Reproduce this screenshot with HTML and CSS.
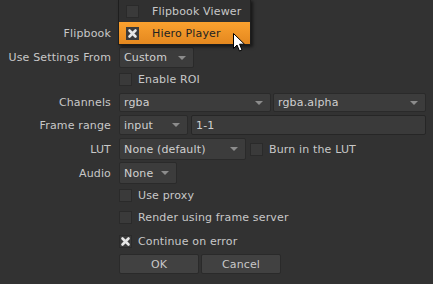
FILE: index.html
```html
<!DOCTYPE html>
<html lang="en">
<head>
    <meta charset="UTF-8">
    <title>Flipbook</title>
    <link rel="stylesheet" href="styles.css">
</head>
<body>
    <div class="panel">
        <div class="row row-flipbook">
            <span class="label">Flipbook</span>
            <!-- covered by the open popup menu -->
            <div class="dropdown w-flip"><i class="arrow"></i></div>
        </div>
        <div class="row row-settings">
            <span class="label">Use Settings From</span>
            <div class="dropdown w-custom"><span>Custom</span><i class="arrow"></i></div>
        </div>
        <div class="row row-check">
            <span class="label"></span>
            <label class="check"><span class="box"></span>Enable ROI</label>
        </div>
        <div class="row row-channels">
            <span class="label">Channels</span>
            <div class="dropdown w-rgba"><span>rgba</span><i class="arrow"></i></div>
            <div class="dropdown w-alpha"><span>rgba.alpha</span><i class="arrow"></i></div>
        </div>
        <div class="row row-frame">
            <span class="label">Frame range</span>
            <div class="dropdown w-input"><span>input</span><i class="arrow"></i></div>
            <div class="field">1-1</div>
        </div>
        <div class="row row-lut">
            <span class="label">LUT</span>
            <div class="dropdown w-lut"><span>None (default)</span><i class="arrow"></i></div>
            <label class="check check-inline"><span class="box"></span>Burn in the LUT</label>
        </div>
        <div class="row row-audio">
            <span class="label">Audio</span>
            <div class="dropdown w-audio"><span>None</span><i class="arrow"></i></div>
        </div>
        <div class="row row-check row-proxy">
            <span class="label"></span>
            <label class="check"><span class="box"></span>Use proxy</label>
        </div>
        <div class="row row-check">
            <span class="label"></span>
            <label class="check"><span class="box"></span>Render using frame server</label>
        </div>
        <div class="row row-check row-continue">
            <span class="label"></span>
            <label class="check"><span class="box checked"><svg viewBox="0 0 13 13" width="13" height="13"><path d="M3.5 3.5 L9.5 9.5 M9.5 3.5 L3.5 9.5" stroke="#e6e6e6" stroke-width="2.6" stroke-linecap="round"/></svg></span>Continue on error</label>
        </div>
        <div class="row row-buttons">
            <span class="label"></span>
            <button class="btn">OK</button>
            <button class="btn">Cancel</button>
        </div>
    </div>

    <div class="popup">
        <div class="popup-item"><span class="box"></span>Flipbook Viewer</div>
        <div class="popup-item active"><span class="box checked"><svg viewBox="0 0 13 13" width="13" height="13"><path d="M3.5 3.5 L9.5 9.5 M9.5 3.5 L3.5 9.5" stroke="#e6e6e6" stroke-width="2.6" stroke-linecap="round"/></svg></span>Hiero Player</div>
    </div>

    <svg class="cursor" width="13" height="20" viewBox="0 0 13 20">
        <path d="M0.5 0.5 L0.5 15.5 L4 12 L6.5 18 L9 17 L6.6 11.2 L11.5 11.2 Z" fill="#fff" stroke="#000" stroke-width="1"/>
    </svg>
</body>
</html>
```

FILE: styles.css
```css
/* Base */
body {
    margin: 0;
    background: #323232;
    font-family: 'DejaVu Sans', sans-serif;
    font-size: 11px;
    letter-spacing: 0.15px;
    color: #c8c8c8;
    width: 433px;
    height: 284px;
    overflow: hidden;
    position: relative;
}

.panel {
    padding-top: 23px;
}

.row {
    display: flex;
    align-items: center;
    height: 21px;
}

.label {
    width: 111px;
    flex: none;
    text-align: right;
    margin-right: 8px;
    white-space: nowrap;
}

.row-settings { margin-top: 3px; height: 21px; }
.row-check { height: 21px; margin-top: 1px; }
.row-channels { margin-top: 3px; height: 19px; }
.row-frame { margin-top: 3px; height: 20px; }
.row-lut { margin-top: 3px; height: 22px; }
.row-audio { margin-top: 2px; height: 22px; }
.row-proxy { margin-top: 1px; }
.row-continue { margin-top: 3px; }
.row-buttons { margin-top: 2px; height: 20px; }

/* Dropdowns */
.dropdown {
    position: relative;
    height: 100%;
    box-sizing: border-box;
    background: #3c3c3c;
    border: 1px solid #2a2a2a;
    border-radius: 2px;
    padding-left: 4px;
    display: flex;
    align-items: center;
    color: #d0d0d0;
}

.arrow {
    position: absolute;
    right: 7px;
    top: 50%;
    margin-top: -2px;
    width: 0;
    height: 0;
    border-left: 4px solid transparent;
    border-right: 4px solid transparent;
    border-top: 4px solid #8c8c8c;
}

.w-flip { width: 131px; }
.w-custom { width: 75px; }
.w-rgba { width: 152px; }
.w-alpha { width: 153px; margin-left: 2px; }
.w-input { width: 69px; }
.w-lut { width: 127px; }
.w-audio { width: 58px; }

.field {
    margin-left: 3px;
    width: 235px;
    height: 100%;
    box-sizing: border-box;
    background: #3a3a3a;
    border: 1px solid #262626;
    border-radius: 2px;
    padding-left: 4px;
    display: flex;
    align-items: center;
    color: #d0d0d0;
}

/* Checkboxes */
.check {
    display: flex;
    align-items: center;
    white-space: nowrap;
}

.check-inline {
    margin-left: 4px;
}

.box {
    width: 13px;
    height: 13px;
    box-sizing: border-box;
    background: #3a3a3a;
    border: 1px solid #2a2a2a;
    margin-right: 6px;
    flex: none;
    display: block;
    position: relative;
}

.box svg {
    position: absolute;
    left: -1px;
    top: -1px;
}

/* Buttons */
.btn {
    width: 80px;
    height: 20px;
    margin-right: 2px;
    background: #414141;
    border: 1px solid #2a2a2a;
    border-radius: 2px;
    color: #c8c8c8;
    font-family: 'DejaVu Sans', sans-serif;
    font-size: 11px;
    letter-spacing: 0.15px;
    padding: 0;
}

/* Popup menu */
.popup {
    position: absolute;
    left: 118px;
    top: -1px;
    width: 131px;
    background: #303030;
    border: 1px solid #1e1e1e;
    box-shadow: 2px 2px 3px rgba(0, 0, 0, 0.55);
}

.popup-item {
    height: 22px;
    display: flex;
    align-items: center;
    padding-left: 7px;
    color: #c8c8c8;
}

.popup-item .box {
    margin-right: 13px;
}

.popup-item.active {
    background: linear-gradient(#faa12f, #e4881f);
    color: #222;
}

.popup-item.active .box {
    background: #3a3a3a;
    border-color: #3a3a3a;
}

.cursor {
    position: absolute;
    left: 233px;
    top: 33px;
}
```
